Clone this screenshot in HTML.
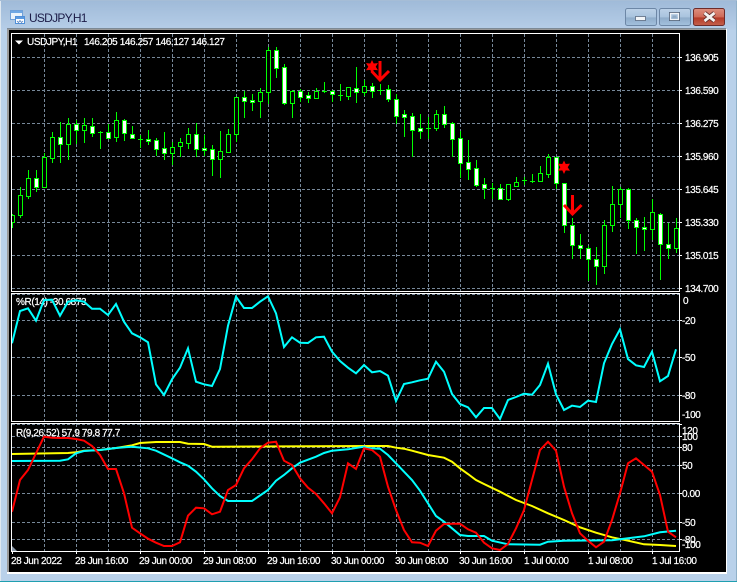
<!DOCTYPE html>
<html><head><meta charset="utf-8"><style>
html,body{margin:0;padding:0;background:#b9d1ea}
svg{display:block}
text{font-family:"Liberation Sans",sans-serif;font-size:10px;letter-spacing:-.4px;fill:#fff;stroke:#fff;stroke-width:.22px}
.g{stroke:#778899;stroke-width:1;stroke-dasharray:3 2;fill:none;shape-rendering:crispEdges}
.b{fill:none;stroke:#fff;stroke-width:1;shape-rendering:crispEdges}
.c{fill:none;stroke-width:2;stroke-linejoin:miter}
</style></head><body>
<svg width="737" height="582" viewBox="0 0 737 582" xmlns="http://www.w3.org/2000/svg">
<defs>
<linearGradient id="tb" x1="0" y1="0" x2="0" y2="1"><stop offset="0" stop-color="#9fbad8"/><stop offset="1" stop-color="#b6cee8"/></linearGradient>
<linearGradient id="btn" x1="0" y1="0" x2="0" y2="1"><stop offset="0" stop-color="#bcd2e8"/><stop offset=".5" stop-color="#a9c3de"/><stop offset=".55" stop-color="#8facca"/><stop offset="1" stop-color="#a4c2de"/></linearGradient>
<linearGradient id="cls" x1="0" y1="0" x2="0" y2="1"><stop offset="0" stop-color="#dd9080"/><stop offset=".5" stop-color="#cf6a58"/><stop offset=".55" stop-color="#b53a28"/><stop offset="1" stop-color="#c4614c"/></linearGradient>
<clipPath id="cp1"><rect x="12" y="34" width="667" height="257"/></clipPath>
<clipPath id="cp2"><rect x="12" y="294" width="667" height="127"/></clipPath>
<clipPath id="cp3"><rect x="12" y="424" width="667" height="127"/></clipPath>
</defs>
<rect width="737" height="582" fill="#b9d1ea"/>
<rect width="737" height="30" fill="url(#tb)"/>
<rect x="0" y="0" width="1" height="582" fill="#dfe8f0"/>
<rect x="736" y="0" width="1" height="582" fill="#8fb0c8"/>
<rect x="0" y="581" width="737" height="1" fill="#1f9fb0"/>
<rect x="0" y="0" width="737" height="1" fill="#a6bdd6"/>

<!-- title icon -->
<g shape-rendering="crispEdges">
<rect x="10.5" y="10.5" width="12" height="9" fill="#eaf3fb" stroke="#6fa0d8"/>
<rect x="11" y="11" width="11" height="2" fill="#6fa8e4"/>
<rect x="15.5" y="16.5" width="9" height="7" fill="#fff" stroke="#4f8fd8"/>
<rect x="16" y="17" width="8" height="2" fill="#5c9ae0"/>
</g>
<path d="M17 21l1.5 1.5 1.5-2 1.5 2 1.5-1.5" fill="none" stroke="#4f7fc0" stroke-width=".8"/>
<text x="29" y="22" style="font-size:12px;letter-spacing:-.75px;fill:#1c1c48;stroke:none">USDJPY,H1</text>

<!-- window buttons -->
<rect x="625.5" y="8.5" width="31" height="17" rx="2" fill="url(#btn)" stroke="#6d87a6"/>
<rect x="659.5" y="8.5" width="31" height="17" rx="2" fill="url(#btn)" stroke="#6d87a6"/>
<rect x="693.5" y="8.5" width="31" height="17" rx="2" fill="url(#cls)" stroke="#6e2c2a"/>
<rect x="635.5" y="16.5" width="10" height="4" fill="#f2f5f8" stroke="#4a5a70" stroke-opacity=".7"/>
<rect x="669.5" y="12.5" width="10" height="8" fill="none" stroke="#3e4e64" stroke-opacity=".8"/>
<rect x="670.5" y="13.5" width="8" height="6" fill="none" stroke="#f0f4f8" stroke-width="1.3"/>
<rect x="672.5" y="15.5" width="4" height="2" fill="#8fa8c2"/>
<path d="M704.5 13L714.5 21M714.5 13L704.5 21" stroke="#5a2a2a" stroke-width="4.4"/>
<path d="M704.5 13L714.5 21M714.5 13L704.5 21" stroke="#f4f2f0" stroke-width="2.8"/>

<!-- client -->
<rect x="7" y="28" width="719" height="545" fill="#9a9a9a"/>
<rect x="9" y="30" width="717" height="543" fill="#000"/>
<rect x="7" y="28" width="719" height="1" fill="#7d8a96"/>
<rect x="726" y="29" width="1" height="545" fill="#fff"/>
<rect x="7" y="572" width="720" height="2" fill="#fff"/>

<!-- grid -->
<path class="g" d="M44.5 34V291M76.5 34V291M108.5 34V291M140.5 34V291M172.5 34V291M204.5 34V291M236.5 34V291M268.5 34V291M300.5 34V291M332.5 34V291M364.5 34V291M396.5 34V291M428.5 34V291M460.5 34V291M492.5 34V291M524.5 34V291M556.5 34V291M588.5 34V291M620.5 34V291M652.5 34V291"/>
<path class="g" d="M44.5 294V421M76.5 294V421M108.5 294V421M140.5 294V421M172.5 294V421M204.5 294V421M236.5 294V421M268.5 294V421M300.5 294V421M332.5 294V421M364.5 294V421M396.5 294V421M428.5 294V421M460.5 294V421M492.5 294V421M524.5 294V421M556.5 294V421M588.5 294V421M620.5 294V421M652.5 294V421"/>
<path class="g" d="M44.5 424V551M76.5 424V551M108.5 424V551M140.5 424V551M172.5 424V551M204.5 424V551M236.5 424V551M268.5 424V551M300.5 424V551M332.5 424V551M364.5 424V551M396.5 424V551M428.5 424V551M460.5 424V551M492.5 424V551M524.5 424V551M556.5 424V551M588.5 424V551M620.5 424V551M652.5 424V551"/>
<path class="g" d="M12 57.5H679M12 90.5H679M12 123.5H679M12 156.5H679M12 189.5H679M12 222.5H679M12 255.5H679M12 288.5H679"/>
<path class="g" d="M12 294.5H679M12 320.5H679M12 357.5H679M12 395.5H679"/>
<path class="g" d="M12 424.5H679M12 436.5H679M12 447.5H679M12 465.5H679M12 493.5H679M12 522.5H679M12 539.5H679"/>

<!-- candles -->
<g clip-path="url(#cp1)" shape-rendering="crispEdges" stroke="#00ff00" stroke-width="1">
<path fill="none" d="M12.5 214V228M20.5 187V218M28.5 170V199M36.5 170V192M44.5 153V187M52.5 132V163M60.5 122V163M68.5 118V160M76.5 120V144M84.5 118V143M92.5 118V137M100.5 131V149M108.5 124V138M116.5 112V142M124.5 119V141M132.5 126V139M140.5 135V148M148.5 130V145M156.5 138V156M164.5 132V160M172.5 142V165M180.5 138V157M188.5 128V149M196.5 123V157M204.5 135V156M212.5 145V176M220.5 131V178M228.5 129V152M236.5 97V142M244.5 91V118M252.5 94V111M260.5 88V118M268.5 47V104M276.5 47V78M284.5 64V105M292.5 90V118M300.5 89V102M308.5 92V103M316.5 88V99M324.5 82V93M332.5 90V102M340.5 84V101M348.5 87V100M356.5 67V103M364.5 80V96M372.5 83V98M380.5 84V95M388.5 85V102M396.5 94V124M404.5 110V137M412.5 113V157M420.5 114V139M428.5 117V139M436.5 110V131M444.5 106V128M452.5 122V157M460.5 131V178M468.5 140V180M476.5 160V187M484.5 178V199M492.5 183V199M500.5 184V200M508.5 184V201M516.5 177V186M524.5 177V185M532.5 174V183M540.5 166V181M548.5 154V178M556.5 157V189M564.5 183V233M572.5 218V259M580.5 234V259M588.5 246V281M596.5 247V285M604.5 220V274M612.5 186V232M620.5 187V218M628.5 188V229M636.5 218V254M644.5 217V251M652.5 199V240M660.5 213V280M668.5 223V259M676.5 218V253"/>
<path fill="none" d="M98 132.5h5M138 139.5h5M322 91.5h5M338 95.5h5M378 90.5h5M426 128.5h5M490 188.5h5M522 180.5h5M530 181.5h5"/>
<path fill="#000" d="M10.5 215.5h4v7h-4zM18.5 195.5h4v20h-4zM26.5 178.5h4v18h-4zM42.5 157.5h4v30h-4zM50.5 137.5h4v21h-4zM66.5 124.5h4v20h-4zM82.5 125.5h4v5h-4zM114.5 120.5h4v17h-4zM170.5 147.5h4v6h-4zM178.5 142.5h4v4h-4zM186.5 134.5h4v9h-4zM218.5 151.5h4v8h-4zM226.5 134.5h4v18h-4zM234.5 97.5h4v37h-4zM258.5 92.5h4v9h-4zM266.5 50.5h4v42h-4zM290.5 91.5h4v12h-4zM314.5 91.5h4v7h-4zM346.5 87.5h4v9h-4zM362.5 86.5h4v6h-4zM434.5 114.5h4v14h-4zM506.5 184.5h4v15h-4zM514.5 182.5h4v4h-4zM538.5 173.5h4v8h-4zM546.5 157.5h4v17h-4zM602.5 225.5h4v41h-4zM610.5 204.5h4v21h-4zM618.5 189.5h4v15h-4zM650.5 212.5h4v17h-4zM674.5 228.5h4v20h-4z"/>
<path fill="#fff" d="M34.5 178.5h4v9h-4zM58.5 137.5h4v7h-4zM74.5 124.5h4v6h-4zM90.5 126.5h4v7h-4zM106.5 132.5h4v6h-4zM122.5 120.5h4v13h-4zM130.5 134.5h4v4h-4zM146.5 139.5h4v2h-4zM154.5 140.5h4v9h-4zM162.5 148.5h4v5h-4zM194.5 134.5h4v15h-4zM202.5 148.5h4v2h-4zM210.5 149.5h4v10h-4zM242.5 97.5h4v4h-4zM250.5 100.5h4v2h-4zM274.5 50.5h4v18h-4zM282.5 67.5h4v36h-4zM298.5 91.5h4v6h-4zM306.5 95.5h4v3h-4zM330.5 91.5h4v3h-4zM354.5 88.5h4v4h-4zM370.5 86.5h4v5h-4zM386.5 89.5h4v10h-4zM394.5 99.5h4v17h-4zM402.5 114.5h4v3h-4zM410.5 116.5h4v14h-4zM418.5 128.5h4v3h-4zM442.5 114.5h4v10h-4zM450.5 123.5h4v16h-4zM458.5 138.5h4v25h-4zM466.5 162.5h4v7h-4zM474.5 168.5h4v17h-4zM482.5 184.5h4v4h-4zM498.5 188.5h4v11h-4zM554.5 157.5h4v26h-4zM562.5 183.5h4v42h-4zM570.5 225.5h4v20h-4zM578.5 245.5h4v3h-4zM586.5 248.5h4v11h-4zM594.5 259.5h4v7h-4zM626.5 189.5h4v31h-4zM634.5 220.5h4v7h-4zM642.5 227.5h4v2h-4zM658.5 214.5h4v30h-4zM666.5 244.5h4v4h-4z"/>
</g>

<!-- signals -->
<g fill="#ff0000" stroke="none">
<path d="M372 60l1.7 3.5 4.3-.4-2.3 3.6 2.3 3.6-4.3-.4-1.7 3.6-1.7-3.6-4.3.4 2.3-3.6-2.3-3.6 4.3.4z"/>
<path d="M564 160.5l1.7 3.5 4.3-.4-2.3 3.6 2.3 3.6-4.3-.4-1.7 3.6-1.7-3.6-4.3.4 2.3-3.6-2.3-3.6 4.3.4z"/>
</g>
<path d="M380 61V80M371.5 71L380 80L389 71" fill="none" stroke="#ff0000" stroke-width="3"/>
<path d="M572.5 195V214M564 205L572.5 214L581.5 205" fill="none" stroke="#ff0000" stroke-width="3"/>

<!-- indicator labels -->
<text x="16" y="305">%R(14) -30.6873</text>
<text x="16" y="436">R(9,26,52) 57.9 79.8 77.7</text>

<!-- WPR -->
<g clip-path="url(#cp2)">
<polyline class="c" stroke="#00ffff" points="12,343.3 20,311 28,308.3 36,320.7 44,300 52,299.7 60,315.7 68,301.7 76,300.3 84,301.7 92,308.7 100,308.7 108,315 116,304 124,321.7 132,333.3 140,337.3 148,342.3 156,384.3 164,395 172,379.3 180,367.7 188,348.3 196,381.7 204,384.3 212,386 220,369 228,325.7 236,296.7 244,308 252,308 260,301.7 268,296.3 276,313.3 284,347 292,337.3 300,342.7 308,343 316,337.3 324,336.7 332,351.7 340,361 348,367.7 356,373.3 364,365 372,372.3 380,371 388,375.7 396,401 404,384 412,382.3 420,380.3 428,378.7 436,361.7 444,371.7 452,394 460,404 468,407.3 476,417.3 484,408 492,408 500,419 508,400 516,397 524,393.7 532,394.7 540,385 548,363.7 556,394.3 564,410 572,405.7 580,407 588,400.7 596,402 604,363.3 612,344 620,329.3 628,359 636,365.3 644,367 652,351.7 660,381.3 668,376 676,349.3"/>
</g>

<!-- Stochastic-like -->
<g clip-path="url(#cp3)">
<path d="M12 546L17 551H12z" fill="#8a98a8"/>
<polyline class="c" stroke="#ffff00" points="12,454 68,453 76,452.3 84,450.7 100,450 116,448 132,445.3 140,443 156,442 180,442 188,443.7 204,444 212,446.7 370,446 388,446 396,447.7 404,448.7 412,450.7 428,455 444,457.7 452,461.7 460,468.3 468,474 476,480 484,484 500,491.7 516,500 532,506 548,513.3 564,520 580,527.3 596,532.7 612,537.3 628,540.7 644,544.3 660,545 676,546"/>
<polyline class="c" stroke="#00ffff" points="12,461 60,460.7 68,459.3 76,453.3 84,451 100,450 116,448 132,446.7 148,448.3 156,450.7 172,458.3 180,462.3 188,465.7 196,471.7 204,479.3 212,488.3 220,496 228,501 252,501 268,490 276,480.7 284,475 292,468.3 300,462.7 316,456.7 324,453 332,450.7 348,449.3 364,446.7 367,448 380,448.7 388,455 396,463.3 404,471.7 412,480 420,490.7 428,503.3 436,516 444,521.7 452,528.3 460,535 468,536 484,536 492,540.7 508,544.3 540,544.7 548,541.7 564,540.7 612,540.3 628,538.3 644,536.3 660,532.3 676,530.7"/>
<polyline class="c" stroke="#ff0000" points="12,511.7 20,480 28,470 36,453.3 44,436.7 52,437.7 60,438 68,438 76,439 84,440.7 92,446 100,455 108,469 116,469 124,493.3 132,527.7 140,533.3 148,538.7 156,542.7 164,546 172,546 180,542.3 188,515.7 196,507.7 204,508.3 212,514.3 220,511.7 228,490 236,485 244,468.3 252,459.3 260,448.3 268,442.7 276,441.7 284,460.7 292,465 300,478.3 308,487.7 316,494 324,503.3 332,513.3 340,497.3 348,463.3 356,469 364,448.3 372,450 380,456.7 388,486.7 396,510 404,530 412,542.3 420,542.7 428,546 436,530.7 444,524 452,523.7 460,523.7 468,529.3 476,532.7 484,542.7 492,548.3 500,550 508,544 516,528.3 524,510 532,480 540,450 548,441.7 556,450.7 564,486.7 572,513.3 580,533.3 588,540.7 596,547.3 604,541.7 612,520 620,493.3 628,463.3 636,458.3 644,465 652,471.7 660,495 668,531.7 676,537.3"/>
</g>

<!-- pane borders -->
<rect class="b" x="11.5" y="33.5" width="668" height="258"/>
<rect class="b" x="11.5" y="293.5" width="668" height="128"/>
<rect class="b" x="11.5" y="423.5" width="668" height="128"/>
<path class="b" d="M679 57.5h3M679 90.5h3M679 123.5h3M679 156.5h3M679 189.5h3M679 222.5h3M679 255.5h3M679 288.5h3M679 320.5h3M679 357.5h3M679 395.5h3M679 424.5h3M679 436.5h3M679 447.5h3M679 465.5h3M679 493.5h3M679 522.5h3M679 539.5h3M12.5 551v3M76.5 551v3M140.5 551v3M204.5 551v3M268.5 551v3M332.5 551v3M396.5 551v3M460.5 551v3M524.5 551v3M588.5 551v3M652.5 551v3"/>

<!-- header -->
<path d="M15 40.5h8l-4 4z" fill="#fff"/>
<text x="27" y="45">USDJPY,H1</text>
<text x="84" y="45">146.205 146.257 146.127 146.127</text>

<!-- price axis -->
<text x="685" y="61">136.905</text>
<text x="685" y="94">136.590</text>
<text x="685" y="127">136.275</text>
<text x="685" y="160">135.960</text>
<text x="685" y="193">135.645</text>
<text x="685" y="226">135.330</text>
<text x="685" y="259">135.015</text>
<text x="685" y="292">134.700</text>
<text x="683" y="304">0</text>
<text x="682" y="324">-20</text>
<text x="682" y="361">-50</text>
<text x="682" y="399">-80</text>
<text x="682" y="418">-100</text>
<text x="682" y="434">120</text>
<text x="682" y="440">100</text>
<text x="682" y="451">80</text>
<text x="682" y="469">50</text>
<text x="682" y="497">0.00</text>
<text x="682" y="526">-50</text>
<text x="682" y="543">-80</text>
<text x="682" y="548">-100</text>

<!-- time axis -->
<text x="11" y="564">28 Jun 2022</text>
<text x="75" y="564">28 Jun 16:00</text>
<text x="139" y="564">29 Jun 00:00</text>
<text x="203" y="564">29 Jun 08:00</text>
<text x="267" y="564">29 Jun 16:00</text>
<text x="331" y="564">30 Jun 00:00</text>
<text x="395" y="564">30 Jun 08:00</text>
<text x="459" y="564">30 Jun 16:00</text>
<text x="524" y="564">1 Jul 00:00</text>
<text x="588" y="564">1 Jul 08:00</text>
<text x="652" y="564">1 Jul 16:00</text>
</svg>
</body></html>
